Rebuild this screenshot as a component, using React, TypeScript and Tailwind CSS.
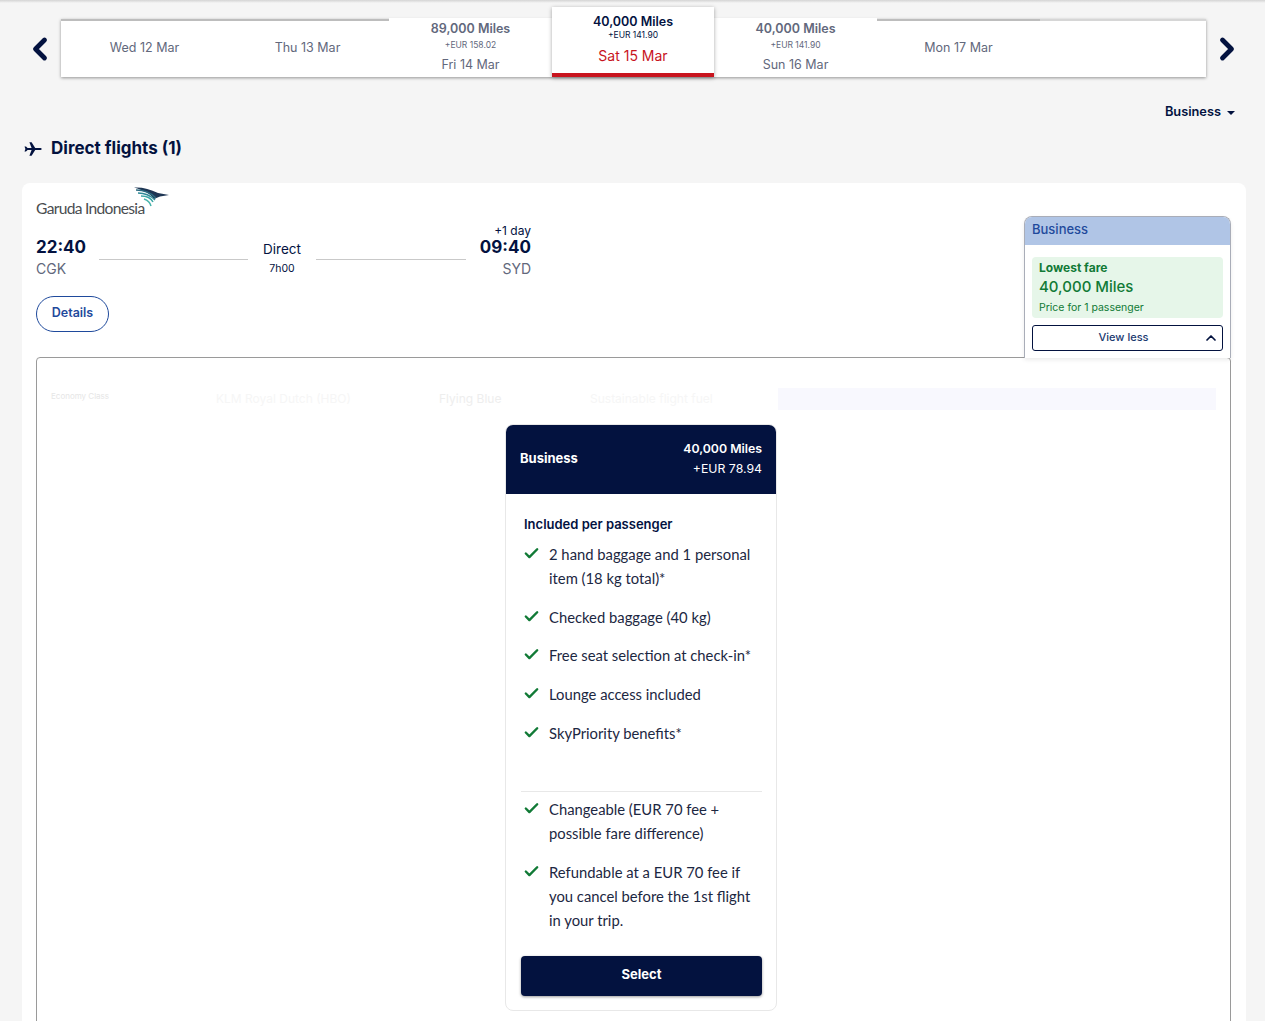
import React from 'react';
import { ChevronLeft, ChevronRight, ChevronUp, Check } from 'lucide-react';

const font = { fontFamily: 'Inter, "Noto Sans", sans-serif' };

// === Date strip data ===
const days = [
  { date: 'Wed 12 Mar' },
  { date: 'Thu 13 Mar' },
  { date: 'Fri 14 Mar', miles: '89,000 Miles', eur: '+EUR 158.02' },
  { date: 'Sat 15 Mar', miles: '40,000 Miles', eur: '+EUR 141.90', selected: true },
  { date: 'Sun 16 Mar', miles: '40,000 Miles', eur: '+EUR 141.90' },
  { date: 'Mon 17 Mar' },
];

const included = [
  ['2 hand baggage and 1 personal', 'item (18 kg total)*'],
  ['Checked baggage (40 kg)'],
  ['Free seat selection at check-in*'],
  ['Lounge access included'],
  ['SkyPriority benefits*'],
];

const conditions = [
  ['Changeable (EUR 70 fee +', 'possible fare difference)'],
  ['Refundable at a EUR 70 fee if', 'you cancel before the 1st flight', 'in your trip.'],
];

function DayCell({ day }: any) {
  if (day.selected) {
    return (
      <div className="w-[162px] h-[70px] -mt-[12px] bg-white border-b-4 border-[#c8141e] shadow-[0_1px_4px_rgba(0,0,0,0.35)] flex flex-col items-center relative z-10">
        <div className="mt-[7px] text-[12.5px] leading-[16px] font-semibold text-[#03123f]">{day.miles}</div>
        <div className="text-[8.5px] leading-[11px] text-[#03123f]">{day.eur}</div>
        <div className="mt-[6px] text-[14px] leading-[18px] text-[#c8141e]">{day.date}</div>
      </div>
    );
  }
  if (day.miles) {
    return (
      <div className="w-[163px] h-[59px] -mt-[1px] bg-white flex flex-col items-center">
        <div className="mt-[3px] text-[12.5px] leading-[16px] font-semibold text-[#62687c]">{day.miles}</div>
        <div className="mt-[2px] text-[8.5px] leading-[12px] text-[#62687c]">{day.eur}</div>
        <div className="mt-[6px] text-[12.5px] leading-[16px] text-[#62687c]">{day.date}</div>
      </div>
    );
  }
  return (
    <div className="w-[163px] h-[58px] pb-[2px] border-t-2 border-[#bdbdbd] flex items-center justify-center text-[12.5px] text-[#62687c]">
      {day.date}
    </div>
  );
}

function PlaneIcon() {
  return (
    <svg width="18" height="14" viewBox="0 0 18 14" fill="#03123f">
      <path d="M0.5 4.6 L2 4.6 L3.6 6 L7.6 6 L5.4 0.2 L7.6 0.2 L11.2 6 L15.6 6 C17 6 17.8 6.6 17.8 7 C17.8 7.4 17 8 15.6 8 L11.2 8 L7.6 13.8 L5.4 13.8 L7.6 8 L3.6 8 L2 9.4 L0.5 9.4 L1.4 7 Z" />
    </svg>
  );
}

function GarudaWing() {
  return (
    <svg width="38" height="26" viewBox="0 0 38 26" fill="none">
      <path d="M2 0.5 C10 0 18 2 26 6 L37 8 L28 9.5 L22 12 C19 7 11 3 2 0.5 Z" fill="#1e3654" />
      <path d="M4 3 C12 3 19 6 24 11" stroke="#2a6a80" strokeWidth="1.4" />
      <path d="M6 6 C13 6 19 9 23 13" stroke="#2f8a98" strokeWidth="1.4" />
      <path d="M9 9 C14 9 19 11 21 15" stroke="#3aa5a5" strokeWidth="1.5" />
      <path d="M12 12 C15 13 18 15 19 19" stroke="#47b3ab" strokeWidth="1.5" />
    </svg>
  );
}

function Benefit({ lines }: { lines: string[] }) {
  return (
    <li className="flex mb-[14.67px]">
      <Check className="w-[17px] h-[17px] mt-[3px] ml-[2px] shrink-0 text-[#117a36]" strokeWidth={3.4} />
      <div style={{ fontFamily: 'Lato, sans-serif' }} className="ml-[9px] text-[14.8px] leading-[24px] text-[#1c2742]">
        {lines.map((l) => (
          <div key={l}>{l}</div>
        ))}
      </div>
    </li>
  );
}

// === App Component ===
export default function App() {
  return (
    <div style={font} className="relative h-[1021px] overflow-hidden bg-[#f5f5f5] text-[#03123f]">
      {/* header shadow */}
      <div className="h-[3px] bg-gradient-to-b from-[#d4d4d4] to-[#f5f5f5]" />

      {/* Date strip */}
      <div className="flex items-center pt-[16px]">
        <ChevronLeft className="relative top-[1px] w-[36px] h-[36px] ml-[22px] mr-[-15px] text-[#03123f]" strokeWidth={3.2} />
        <div className="flex-none ml-[18px] w-[1145px] h-[58px] flex bg-white shadow-[0_1px_3px_rgba(0,0,0,0.4)]">
          <div className="w-[2px] border-t-2 border-[#bdbdbd]" />
          {days.map((d, i) => (
            <DayCell key={i} day={d} />
          ))}
          <div className="flex-1 border-t-2 border-[#d6d6d6]" />
        </div>
        <ChevronRight className="relative top-[1px] w-[36px] h-[36px] ml-[3px] text-[#03123f]" strokeWidth={3.2} />
      </div>

      {/* Cabin filter */}
      <div className="flex justify-end items-center mt-[25px] pr-[30px] h-[20px]">
        <span className="text-[12.8px] font-semibold">Business</span>
        <span className="ml-[6px] mt-[2px] w-0 h-0 border-x-[4px] border-x-transparent border-t-[4px] border-t-[#03123f]" />
      </div>

      {/* Heading */}
      <div className="flex items-center ml-[24px] mt-[15px] h-[24px]">
        <PlaneIcon />
        <h2 className="ml-[9px] text-[17px] font-bold">Direct flights (1)</h2>
      </div>

      {/* Flight card */}
      <div className="relative ml-[22px] mr-[19px] mt-[22px] h-[900px] bg-white rounded-[8px] pl-[14px] pr-[15px] pt-[3px]">
        <div className="flex items-end h-[31px]">
          <span style={{ fontFamily: 'Lato, sans-serif' }} className="text-[15.6px] leading-[18px] text-[#4a4d50] tracking-[-0.7px]">
            Garuda Indonesia
          </span>
          <span className="-ml-[12px] mb-[4px]"><GarudaWing /></span>
        </div>

        <div className="flex w-[495px] mt-[11px]">
          <div className="w-[63px]">
            <div className="mt-[8px] text-[17px] leading-[22px] font-bold">22:40</div>
            <div className="mt-[1px] text-[14px] leading-[20px] text-[#62687c]">CGK</div>
          </div>
          <div className="w-[149px] h-[32px] border-b border-[#c9c9c9]" />
          <div className="w-[68px] text-center">
            <div className="mt-[12px] text-[13.5px] leading-[18px]">Direct</div>
            <div className="mt-[4px] text-[10.5px] leading-[14px]">7h00</div>
          </div>
          <div className="w-[150px] h-[32px] border-b border-[#c9c9c9]" />
          <div className="flex-1 text-right -mt-[4px]">
            <div className="text-[12px] leading-[14px]">+1 day</div>
            <div className="mt-[1px] text-[17px] leading-[16px] font-bold">09:40</div>
            <div className="mt-[4px] text-[14px] leading-[20px] text-[#62687c]">SYD</div>
          </div>
        </div>

        <button className="block mt-[17px] w-[73px] h-[36px] pb-[2px] rounded-[18px] border border-[#1f4a9c] bg-white text-[12.5px] font-semibold text-[#1f4a9c]">
          Details
        </button>

        {/* Fare details panel */}
        <div className="mt-[25px] h-[720px] border border-[#9a9a9a] rounded-[4px] px-[14px] pt-[30px]">
          <div className="flex h-[22px] items-center">
            <div className="w-[727px] flex text-[12px] text-[#f6f6f6]">
              <span className="w-[165px] text-[8px] text-[#e6e6e6]">Economy Class</span>
              <span className="w-[223px]">KLM Royal Dutch (HBO)</span>
              <span className="w-[151px] text-[#eeeeee]">Flying Blue</span>
              <span>Sustainable flight fuel</span>
            </div>
            <div className="flex-1 h-[22px] bg-[#f8f8fe]" />
          </div>

          {/* Fare card */}
          <div className="w-[272px] h-[587px] mt-[14px] ml-[454px] rounded-[8px] border border-[#e8e8e8] overflow-hidden">
            <div className="h-[69px] pb-[2px] bg-[#03123f] text-white flex items-center justify-between px-[14px]">
              <span className="text-[13px] font-bold">Business</span>
              <div className="text-right text-[12.3px] leading-[20px]">
                <div className="font-semibold">40,000 Miles</div>
                <div>+EUR 78.94</div>
              </div>
            </div>
            <div className="pl-[15px] pr-[14px]">
              <div className="pl-[3px] mt-[21px] text-[13px] leading-[18px] font-semibold">Included per passenger</div>
              <ul className="mt-[9px] h-[249px]">
                {included.map((lines) => (
                  <Benefit key={lines[0]} lines={lines} />
                ))}
              </ul>
              <ul className="border-t border-[#e8e8e8] pt-[5px]">
                {conditions.map((lines) => (
                  <Benefit key={lines[0]} lines={lines} />
                ))}
              </ul>
              <button className="w-full h-[40px] mt-[10px] pb-[3px] rounded-[4px] bg-[#03123f] text-white text-[13px] font-bold shadow-[0_1px_3px_rgba(0,0,0,0.4)]">
                Select
              </button>
            </div>
          </div>
        </div>

        {/* Cabin box sits over the panel border */}
        <div className="absolute left-[1002px] top-[33px] w-[207px] h-[142px] bg-white rounded-t-[8px] border-x border-t border-[#a9adb8] shadow-[0_2px_4px_rgba(0,0,0,0.08)]">
          <div className="h-[28px] bg-[#b0c5e6] rounded-t-[7px] pl-[7px] text-[13px] leading-[25px] font-medium text-[#1f4a9c]">Business</div>
          <div className="mt-[12px] mx-[7px] h-[61px] bg-[#e6f6e9] rounded-[4px] pl-[7px] pt-[3px] text-[#117a36]">
            <div className="text-[12px] leading-[16px] font-bold">Lowest fare</div>
            <div className="text-[15px] leading-[22px] font-medium">40,000 Miles</div>
            <div className="mt-[2px] text-[10.5px] leading-[16px]">Price for 1 passenger</div>
          </div>
          <button className="relative block mt-[7px] mx-[7px] w-[191px] h-[26px] pr-[8px] pb-[2px] border border-[#03123f] rounded-[3px] text-[11px] font-medium text-[#1c3a70]">
            View less
            <ChevronUp className="absolute right-[3px] top-[4px] w-[16px] h-[16px] text-[#03123f]" strokeWidth={2.6} />
          </button>
        </div>
      </div>
    </div>
  );
}
